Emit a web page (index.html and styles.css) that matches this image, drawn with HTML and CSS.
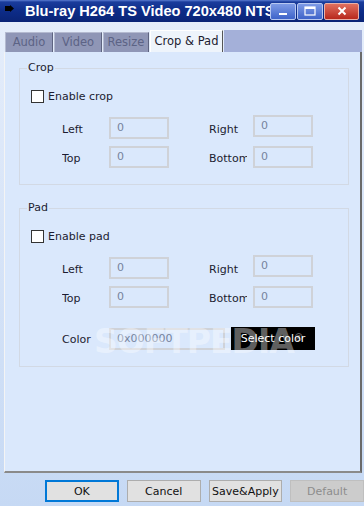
FILE: index.html
```html
<!DOCTYPE html>
<html lang="en">
<head>
    <meta charset="UTF-8" />
    <title>Blu-ray H264 TS Video 720x480 NTSC</title>
    <link rel="stylesheet" href="styles.css">
</head>
<body>

    <div class="titlebar">
        <svg class="app-icon" width="10" height="8" viewBox="0 0 10 8">
            <polygon points="0,1 5,1 5,0 9,3.5 5,7 5,6 0,6" fill="#000" />
        </svg>
        <div class="title">Blu-ray H264 TS Video 720x480 NTSC</div>
        <div class="win-buttons">
            <span class="win-btn">
                <svg width="10" height="10" viewBox="0 0 10 10"><rect x="1" y="7" width="8" height="2" fill="#fff" /></svg>
            </span>
            <span class="win-btn">
                <svg width="12" height="10" viewBox="0 0 12 10"><rect x="1" y="1" width="10" height="8" fill="none" stroke="#fff" stroke-width="1.2" /><rect x="1" y="1" width="10" height="2" fill="#fff" /></svg>
            </span>
            <span class="win-btn close">
                <svg width="10" height="10" viewBox="0 0 10 10"><path d="M1.5 1.5 L8.5 8.5 M8.5 1.5 L1.5 8.5" stroke="#fff" stroke-width="2" /></svg>
            </span>
        </div>
    </div>

    <div class="tabs">
        <span class="tab">Audio</span>
        <span class="tab">Video</span>
        <span class="tab narrow">Resize</span>
        <span class="tab active">Crop &amp; Pad</span>
        <span class="tab-fill"></span>
    </div>

    <div class="panel">
        <fieldset class="group">
            <legend>Crop</legend>
            <label class="check"><span class="box"></span>Enable crop</label>
            <div class="grid">
                <span class="lbl">Left</span><span class="field">0</span>
                <span class="lbl rlbl">Right</span><span class="field up">0</span>
                <span class="lbl">Top</span><span class="field">0</span>
                <span class="lbl rlbl">Bottom</span><span class="field">0</span>
            </div>
        </fieldset>

        <fieldset class="group">
            <legend>Pad</legend>
            <label class="check"><span class="box"></span>Enable pad</label>
            <div class="grid">
                <span class="lbl">Left</span><span class="field">0</span>
                <span class="lbl rlbl">Right</span><span class="field up">0</span>
                <span class="lbl">Top</span><span class="field">0</span>
                <span class="lbl rlbl">Bottom</span><span class="field">0</span>
            </div>
            <div class="color-row">
                <span class="lbl">Color</span>
                <span class="field wide">0x000000</span>
                <span class="pick">Select color</span>
            </div>
        </fieldset>
    </div>

    <div class="buttons">
        <button class="default-btn">OK</button>
        <button>Cancel</button>
        <button>Save&amp;Apply</button>
        <button disabled>Default</button>
    </div>

    <div class="watermark">SOFTPEDIA<sup>®</sup></div>

</body>
</html>
```

FILE: styles.css
```css
body {
    margin: 0;
    width: 364px;
    height: 506px;
    overflow: hidden;
    position: relative;
    font-family: "DejaVu Sans", Verdana, sans-serif;
    font-size: 11px;
    color: #1c1c30;
    background: linear-gradient(#e6eefb, #c6d9f4);
}
.titlebar {
    height: 22px;
    display: flex;
    align-items: center;
    color: #fff;
    background: linear-gradient(#5a7bd0 0, #1a3c9c 2px, #0d2c88 50%, #0a2476 100%);
}
.app-icon {
    margin: 0 0 4px 5px;
    flex: none;
}
.title {
    flex: 1;
    margin-left: 10px;
    font-family: "Liberation Sans", Arial, sans-serif;
    font-weight: bold;
    font-size: 14.6px;
    white-space: nowrap;
    overflow: hidden;
}
.win-buttons {
    display: flex;
    gap: 1px;
    margin-right: 5px;
    flex: none;
}
.win-btn {
    width: 24px;
    height: 15px;
    display: flex;
    align-items: center;
    justify-content: center;
    border: 1px solid #b8c8f0;
    border-radius: 2px;
    background: linear-gradient(#7e9be6, #3e63c9);
}
.win-btn.close {
    width: 33px;
    border-color: #e8b0a8;
    background: linear-gradient(#e07060, #b8281c);
}
.tabs {
    display: flex;
    margin-top: 8px;
    height: 22px;
    padding-left: 5px;
    padding-right: 2px;
}
.tab {
    width: 46px;
    margin-top: 2px;
    margin-right: 1px;
    text-align: center;
    line-height: 19px;
    font-size: 11.5px;
    color: #5c6385;
    background: #8f96b6;
    border-top: 1px solid #b4bad0;
    border-left: 1px solid #b4bad0;
    border-right: 1px solid #5e6480;
}
.tab.narrow {
    width: 44px;
}
.tab.active {
    width: 71px;
    margin-top: 0;
    line-height: 21px;
    color: #1c1c30;
    background: #eef4fb;
    border-top-color: #fff;
    border-left-color: #fff;
    border-right: 1px solid #555;
}
.tab-fill {
    flex: 1;
    background: #a4b0d9;
}
.panel {
    height: 410px;
    margin: 0 2px 0 4px;
    padding-top: 9px;
    background: #dae8fc;
    border-left: 1px solid #f4f4f4;
    border-right: 2px solid #6a6a6a;
    border-bottom: 2px solid #8a8a8a;
}
.group {
    margin: 0 11px 16px 14px;
    padding: 0 0 16px 0;
    border: 1px solid #d2d9e4;
}
.group legend {
    margin-left: 7px;
    padding: 0 1px;
    font-size: 11px;
    line-height: 14px;
}
.check {
    display: flex;
    align-items: center;
    gap: 4px;
    height: 14px;
    margin: 14px 0 0 11px;
}
.box {
    width: 11px;
    height: 11px;
    border: 1px solid #333;
    background: #fff;
}
.grid {
    display: grid;
    grid-template-columns: 47px 100px 44px 60px;
    grid-auto-rows: 22px;
    row-gap: 7px;
    margin: 14px 0 0 42px;
}
.lbl {
    align-self: center;
    padding-top: 2px;
    white-space: nowrap;
    overflow: hidden;
}
.rlbl {
    width: 38px;
}
.field {
    box-sizing: border-box;
    width: 60px;
    padding: 2px 0 0 6px;
    border: 2px solid #cfd2d8;
    color: #76839d;
}
.field.up {
    position: relative;
    top: -2px;
}
.color-row {
    display: flex;
    align-items: center;
    margin: 19px 0 0 42px;
}
.color-row .lbl {
    width: 47px;
}
.field.wide {
    width: 116px;
    height: 22px;
}
.pick {
    margin-left: 6px;
    width: 84px;
    height: 23px;
    line-height: 23px;
    text-align: center;
    background: #000;
    color: #fff;
}
.buttons {
    display: flex;
    gap: 8px;
    padding-left: 45px;
    margin-top: 7px;
}
.buttons button {
    width: 74px;
    height: 22px;
    padding: 0;
    font-family: "DejaVu Sans", Verdana, sans-serif;
    font-size: 11px;
    color: #111;
    background: #e1e1e1;
    border: 1px solid #adadad;
}
.buttons .default-btn {
    border: 2px solid #0078d7;
}
.buttons button:disabled {
    color: #8c8c8c;
    background: #cccccc;
    border-color: #bfbfbf;
}
.watermark {
    position: absolute;
    left: 94px;
    top: 322px;
    font-family: "DejaVu Sans", sans-serif;
    font-weight: bold;
    font-size: 33px;
    letter-spacing: -1px;
    color: rgba(255, 255, 255, 0.4);
}
.watermark sup {
    font-size: 10px;
}
```
